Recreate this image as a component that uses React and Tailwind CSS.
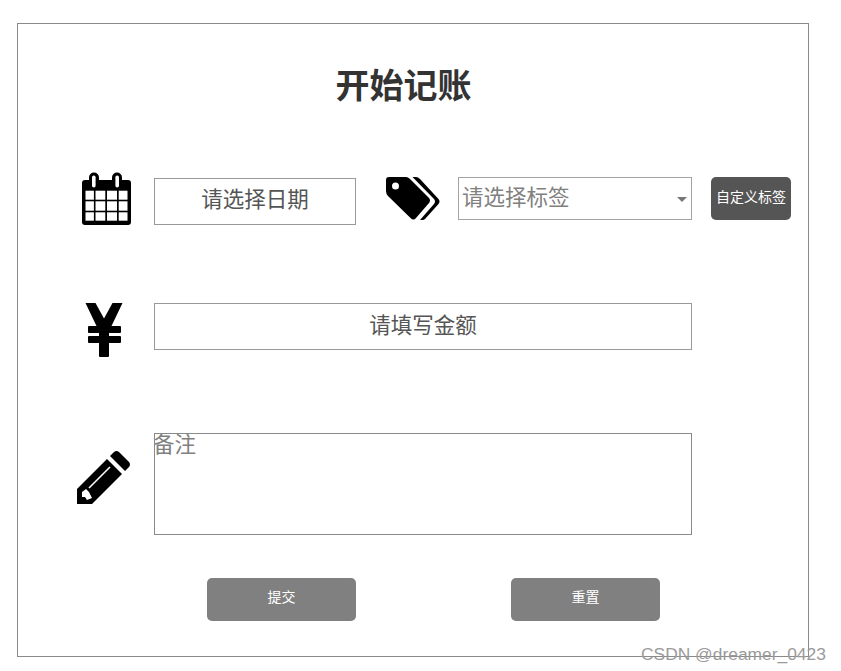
// App.jsx — bookkeeping form ("开始记账").

const CJK = "font-['Noto_Sans_CJK_SC','Noto_Sans',sans-serif]";

function CalendarIcon() {
  return (
    <svg width="49" height="53" viewBox="0 0 49 53" className="ml-[64px] -mt-[5px] block">
      <rect x="0" y="8" width="49" height="45" rx="3" fill="#000" />
      <rect x="7" y="0.5" width="10" height="17" rx="5" fill="#000" />
      <rect x="30" y="0.5" width="10" height="17" rx="5" fill="#000" />
      <rect x="10" y="3.5" width="3.6" height="12" rx="1.8" fill="#fff" />
      <rect x="33.4" y="3.5" width="3.6" height="12" rx="1.8" fill="#fff" />
      {[[18.7, 9], [29.3, 9.4], [40.3, 8.4]].map(([y, h]) => (
        <g key={y}>
          {[[3.5, 8.4], [13.5, 9.8], [25, 10], [36.7, 8.8]].map(([x, w]) => (
            <rect key={x} x={x} y={y} width={w} height={h} fill="#fff" />
          ))}
        </g>
      ))}
    </svg>
  );
}

function TagsIcon() {
  return (
    <svg width="54" height="43" viewBox="0 0 54 43" className="ml-[30px] block shrink-0">
      <path
        fillRule="evenodd"
        d="M3 0H20Q22 0 24 2L43 21Q45 23.5 43 26L30 41Q27.5 44 24.5 41L2 19Q0 17 0 14V3Q0 0 3 0ZM9.5 5.5A3.5 3.5 0 1 0 9.5 12.5A3.5 3.5 0 1 0 9.5 5.5Z"
        fill="#000"
      />
      <path d="M26.5 0H30Q32 0 34 2L52.5 22Q54.5 24.5 52.5 27L39 42Q38 43 36.5 43H34L48 27Q50 24.5 48 22Z" fill="#000" />
    </svg>
  );
}

function YenIcon() {
  return (
    <svg width="38" height="54" viewBox="0 0 38 54" className="ml-[67px] block">
      <path
        d="M0.5 0H10.5L19 15.5L27.5 0H37.5L26.5 23H35Q36 23 36 24V29Q36 30 35 30H24V33H35Q36 33 36 34V39Q36 40 35 40H24V53Q24 54 23 54H15Q14 54 14 53V40H4Q3 40 3 39V34Q3 33 4 33H14V30H4Q3 30 3 29V24Q3 23 4 23H11.5Z"
        fill="#000"
      />
    </svg>
  );
}

function PencilIcon() {
  return (
    <svg width="54" height="54" viewBox="0 0 54 54" className="ml-[59px] mt-[17px] block">
      <path d="M0 39L30 9L45 24L15 54H0Z" fill="#000" />
      <path d="M33 6L37 2Q39.5 0 42 2L52 12Q54 14.5 52 17L48 21Z" fill="#000" />
      <path d="M12 38L33 17" stroke="#fff" strokeWidth="1.6" />
      <path d="M5 42L9 39L12 42L15 48L10 50L8 47H5Z" fill="#fff" />
    </svg>
  );
}

export default function App() {
  return (
    <div className={`relative h-[671px] w-[841px] overflow-hidden bg-white pl-[17px] pt-[23px] ${CJK}`}>
      <div className="h-[634px] w-[792px] border border-[#8a8a8a] pt-[36px]">
        <h1 className="h-[50px] pr-[19px] pb-[2px] text-center text-[34px] font-bold leading-[48px] text-[#333]">
          开始记账
        </h1>

        {/* Date + tag row */}
        <div className="mt-[67px] flex h-[48px] items-start">
          <div className="w-[136px] shrink-0">
            <CalendarIcon />
          </div>
          <input
            placeholder="请选择日期"
            className="mt-px h-[47px] w-[202px] border border-[#999] pb-[8px] text-center text-[21.5px] outline-none placeholder:text-[#555]"
          />
          <TagsIcon />
          <div className="relative ml-[18px] h-[43px] w-[234px] border border-[#a3a3a3] pl-[3px] text-[21.5px] leading-[36px] text-[#808080]">
            请选择标签
            <span className="absolute right-[4px] top-[19px] border-x-[5px] border-t-[5px] border-x-transparent border-t-[#777]" />
          </div>
          <button className="ml-[19px] h-[43px] w-[80px] rounded-[5px] bg-[#555] pb-[4px] text-[14px] text-white">
            自定义标签
          </button>
        </div>

        {/* Amount row */}
        <div className="mt-[78px] flex h-[54px] items-start">
          <div className="w-[136px] shrink-0">
            <YenIcon />
          </div>
          <input
            placeholder="请填写金额"
            className="h-[47px] w-[538px] border border-[#999] pb-[6px] text-center text-[21.5px] outline-none placeholder:text-[#555]"
          />
        </div>

        {/* Remark row */}
        <div className="mt-[76px] flex h-[102px] items-start">
          <div className="w-[136px] shrink-0">
            <PencilIcon />
          </div>
          <textarea
            placeholder="备注"
            className="h-[102px] w-[538px] resize-none border border-[#8a8a8a] indent-[-2px] text-[21.5px] leading-[17px] outline-none placeholder:text-[#808080]"
          />
        </div>

        <div className="mt-[43px] flex pl-[189px]">
          <button className="h-[43px] w-[149px] rounded-[5px] bg-[#808080] pb-[6px] text-[14px] text-white">提交</button>
          <button className="ml-[155px] h-[43px] w-[149px] rounded-[5px] bg-[#808080] pb-[6px] text-[14px] text-white">重置</button>
        </div>
      </div>

      {/* CSDN watermark sits over the card's corner */}
      <span className="absolute left-[641px] top-[641px] font-['Liberation_Sans',sans-serif] text-[17.4px] text-[#9a9a9a]">
        CSDN @dreamer_0423
      </span>
    </div>
  );
}
